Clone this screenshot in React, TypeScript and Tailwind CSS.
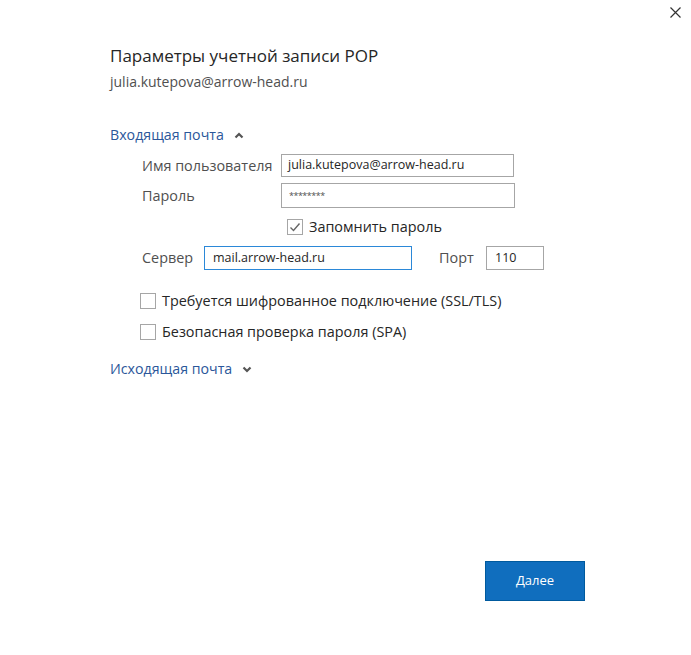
import React from "react";

const font = { fontFamily: '"Open Sans", "Noto Sans", sans-serif' };

function Chevron({ up }: { up?: boolean }) {
  return (
    <svg width="10" height="7" viewBox="0 0 10 7" className="ml-[10px]">
      <polyline
        points={up ? "1.5,5.5 5,2 8.5,5.5" : "1.5,1.5 5,5 8.5,1.5"}
        fill="none"
        stroke="#555"
        strokeWidth="2.2"
      />
    </svg>
  );
}

function Box({ checked }: { checked?: boolean }) {
  return (
    <span className="flex h-[16px] w-[16px] shrink-0 items-center justify-center border border-[#a6a6a6] bg-white">
      {checked && (
        <svg width="12" height="12" viewBox="0 0 12 12">
          <polyline points="1.5,6.5 4.5,9.5 10.5,2.5" fill="none" stroke="#666" strokeWidth="1.4" />
        </svg>
      )}
    </span>
  );
}

export default function App() {
  return (
    <div className="relative h-[655px] w-[691px] overflow-hidden bg-white" style={font}>
      <svg className="absolute left-[670px] top-[7px]" width="11" height="11" viewBox="0 0 11 11">
        <path d="M0.5 0.5 L10.5 10.5 M10.5 0.5 L0.5 10.5" stroke="#333" strokeWidth="1.2" />
      </svg>
      <div className="flex flex-col pl-[110px] pt-[42px]">
        <div className="text-[17px] leading-[28px] text-[#262626]">Параметры учетной записи POP</div>
        <div className="mt-[2px] text-[14px] leading-[20px] text-[#505050]">julia.kutepova@arrow-head.ru</div>

        <div className="mt-[32px] flex items-center text-[14.2px] leading-[22px] text-[#2b579a]">
          Входящая почта
          <Chevron up />
        </div>

        <div className="ml-[32px] mt-[8px] flex flex-col text-[14.4px] text-[#505050]">
          <div className="flex items-center">
            <span className="w-[139px] leading-[20px]">Имя пользователя</span>
            <div className="flex h-[23px] w-[233px] items-center border border-[#a6a6a6] px-[6px] text-[12.5px] text-[#262626]">
              julia.kutepova@arrow-head.ru
            </div>
          </div>
          <div className="mt-[6px] flex items-center">
            <span className="w-[139px] leading-[20px]">Пароль</span>
            <div className="flex h-[25px] w-[234px] items-center border border-[#a6a6a6] px-[7px] text-[9px] tracking-[-0.5px] text-[#505050]">
              ********
            </div>
          </div>
          <div className="ml-[145px] mt-[9px] flex items-center">
            <Box checked />
            <span className="ml-[6px] leading-[20px] text-[#262626]">Запомнить пароль</span>
          </div>
          <div className="mt-[9px] flex items-center">
            <span className="w-[62px] leading-[20px]">Сервер</span>
            <div className="flex h-[24px] w-[208px] items-center border border-[#2b88d8] px-[8px] text-[12.5px] text-[#262626]">
              mail.arrow-head.ru
            </div>
            <span className="ml-[27px] w-[47px] leading-[20px]">Порт</span>
            <div className="flex h-[24px] w-[58px] items-center border border-[#a6a6a6] px-[8px] text-[12.5px] text-[#262626]">
              110
            </div>
          </div>
          <div className="-ml-[2px] mt-[21px] flex items-center">
            <Box />
            <span className="ml-[6px] leading-[20px] text-[#262626]">Требуется шифрованное подключение (SSL/TLS)</span>
          </div>
          <div className="-ml-[2px] mt-[11px] flex items-center">
            <Box />
            <span className="ml-[6px] leading-[20px] text-[#262626]">Безопасная проверка пароля (SPA)</span>
          </div>
        </div>

        <div className="mt-[16px] flex items-center text-[14.2px] leading-[22px] text-[#2b579a]">
          Исходящая почта
          <Chevron />
        </div>

        <div className="ml-[375px] mt-[181px] flex h-[40px] w-[100px] items-center justify-center border border-[#005a9e] bg-[#106ebe] text-[13px] text-white">
          Далее
        </div>
      </div>
    </div>
  );
}
